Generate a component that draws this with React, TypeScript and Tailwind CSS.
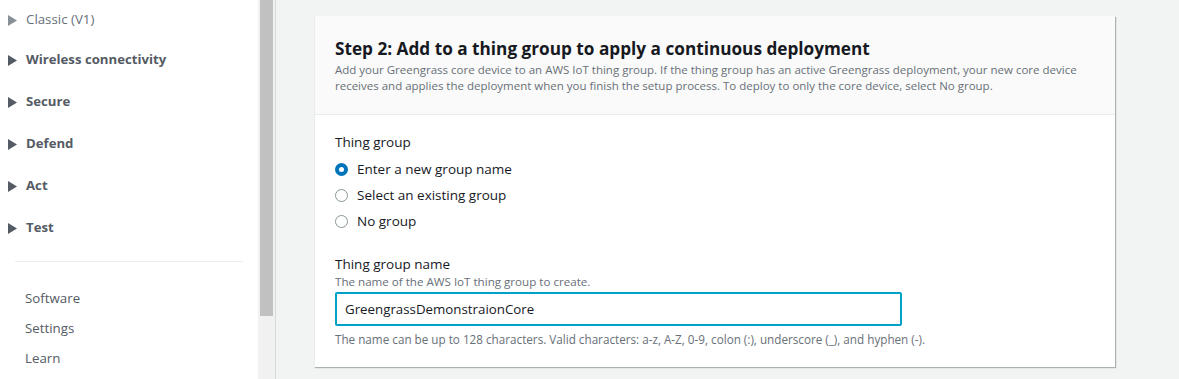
import { useState } from "react";

const navGroups = ["Wireless connectivity", "Secure", "Defend", "Act", "Test"];
const navLinks = ["Software", "Settings", "Learn"];
const options = ["Enter a new group name", "Select an existing group", "No group"];

function Caret({ light }: { light?: boolean }) {
  return (
    <svg width="9" height="11" viewBox="0 0 9 11" className="shrink-0">
      <path d="M0 0 L9 5.5 L0 11 Z" fill={light ? "#879196" : "#545b64"} />
    </svg>
  );
}

function Radio({ checked }: { checked: boolean }) {
  return checked ? (
    <span className="flex h-[13px] w-[13px] items-center justify-center rounded-full bg-[#0073bb]">
      <span className="h-[5px] w-[5px] rounded-full bg-white" />
    </span>
  ) : (
    <span className="h-[13px] w-[13px] rounded-full border border-[#879596] bg-white" />
  );
}

export default function App() {
  const [choice, setChoice] = useState(0);

  return (
    <div
      className="flex h-[379px] w-[1179px] overflow-hidden bg-[#f2f3f3]"
      style={{ fontFamily: '"Open Sans", "Liberation Sans", sans-serif' }}
    >
      <aside className="flex w-[258px] shrink-0 flex-col bg-white">
        <div className="flex h-[39px] items-center gap-[9px] pl-[8px] pt-[1px] text-[13.3px] text-[#687078]">
          <Caret light />
          <span>Classic (V1)</span>
        </div>
        <div className="flex flex-col">
          {navGroups.map((g) => (
            <div
              key={g}
              className="flex h-[42px] items-center gap-[9px] pl-[8px] text-[13.2px] font-bold text-[#545b64]"
            >
              <Caret />
              <span>{g}</span>
            </div>
          ))}
        </div>
        <div className="mx-[15px] mt-[12px] border-t border-[#eaeded]" />
        <div className="flex flex-col pl-[25px] pt-[22px] text-[13.3px] text-[#545b64]">
          {navLinks.map((l) => (
            <div key={l} className="flex h-[30px] items-center">
              {l}
            </div>
          ))}
        </div>
      </aside>

      <div className="flex w-[17px] shrink-0 justify-center bg-[#f1f1f1]">
        <div className="h-[316px] w-[13px] bg-[#c1c1c1]" />
      </div>
      <div className="w-px shrink-0 bg-[#d5dbdb]" />

      <main className="flex-1 pl-[38px] pt-[16px]">
        <section className="w-[801px] border-l border-[#eaeded] bg-white shadow-[1px_1px_1px_0_rgba(0,28,36,0.3)]">
          <header className="border-b border-[#eaeded] bg-[#fafafa] px-[20px] pb-[20px] pt-[22px]">
            <h2 className="text-[17.2px] font-bold leading-[22px] text-[#16191f]">
              Step 2: Add to a thing group to apply a continuous deployment
            </h2>
            <p className="mt-[2px] text-[11.5px] leading-[16px] text-[#687078]">
              Add your Greengrass core device to an AWS IoT thing group. If the thing group has an
              active Greengrass deployment, your new core device receives and applies the deployment
              when you finish the setup process. To deploy to only the core device, select No group.
            </p>
          </header>

          <div className="px-[20px] pb-[20px] pt-[17px]">
            <div className="text-[13.5px] leading-[20px] text-[#16191f]">Thing group</div>
            <div className="mt-[4px] flex flex-col">
              {options.map((o, i) => (
                <label
                  key={o}
                  onClick={() => setChoice(i)}
                  className="flex h-[26px] cursor-pointer items-center gap-[9px] text-[13.5px] text-[#16191f]"
                >
                  <Radio checked={choice === i} />
                  <span>{o}</span>
                </label>
              ))}
            </div>

            <div className="mt-[20px] text-[13.5px] leading-[20px] text-[#16191f]">
              Thing group name
            </div>
            <div className="text-[11.6px] leading-[16px] text-[#687078]">
              The name of the AWS IoT thing group to create.
            </div>
            <input
              defaultValue="GreengrassDemonstraionCore"
              className="mt-[2px] h-[34px] w-[567px] rounded-[2px] border-2 border-[#00a1c9] px-[8px] text-[13.3px] text-[#16191f] outline-none"
            />
            <div className="mt-[5px] text-[11.7px] leading-[16px] text-[#687078]">
              The name can be up to 128 characters. Valid characters: a-z, A-Z, 0-9, colon (:),
              underscore (_), and hyphen (-).
            </div>
          </div>
        </section>
      </main>
    </div>
  );
}
